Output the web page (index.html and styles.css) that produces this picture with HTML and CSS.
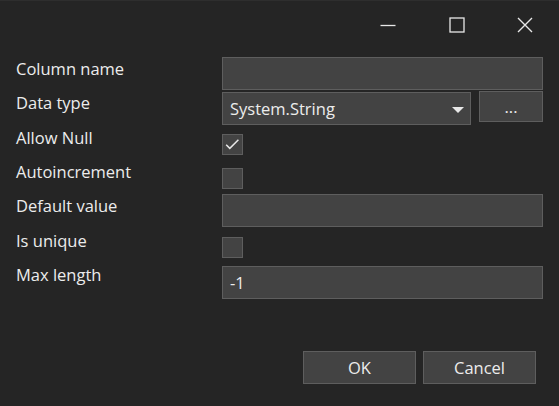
FILE: index.html
```html
<!DOCTYPE html>
<html>
<head>
<meta charset="utf-8">
<link rel="stylesheet" href="styles.css">
</head>
<body>
<div class="window">
  <div class="titlebar">
    <div class="tb-btn"><svg width="16" height="16" viewBox="0 0 16 16"><path d="M0.5 8.5h15" stroke="#e8e8e8" stroke-width="1.3" fill="none"/></svg></div>
    <div class="tb-btn"><svg width="16" height="16" viewBox="0 0 16 16"><rect x="1" y="1" width="14" height="14" stroke="#e8e8e8" stroke-width="1.3" fill="none"/></svg></div>
    <div class="tb-btn last"><svg width="16" height="16" viewBox="0 0 16 16"><path d="M1 1L15 15M15 1L1 15" stroke="#e8e8e8" stroke-width="1.4" fill="none"/></svg></div>
  </div>
  <div class="form">
    <div class="label">Column name</div>
    <div class="cell"><div class="input"></div></div>

    <div class="label">Data type</div>
    <div class="cell combo-row">
      <div class="combo"><span>System.String</span><svg class="arrow" width="12" height="6" viewBox="0 0 12 6"><path d="M0 0h12L6 6z" fill="#e8e8e8"/></svg></div>
      <div class="dots">...</div>
    </div>

    <div class="label">Allow Null</div>
    <div class="cell check-cell"><div class="check"><svg width="19" height="19" viewBox="0 0 19 19"><path d="M3.2 9.8l3.6 3.6 8.6-8.6" stroke="#e8e8e8" stroke-width="1.5" fill="none"/></svg></div></div>

    <div class="label">Autoincrement</div>
    <div class="cell check-cell"><div class="check"></div></div>

    <div class="label">Default value</div>
    <div class="cell"><div class="input"></div></div>

    <div class="label">Is unique</div>
    <div class="cell check-cell"><div class="check"></div></div>

    <div class="label">Max length</div>
    <div class="cell last-cell"><div class="input"><span>-1</span></div></div>
  </div>
  <div class="footer">
    <div class="btn">OK</div>
    <div class="btn">Cancel</div>
  </div>
</div>
</body>
</html>
```
FILE: styles.css
```css
html, body {
  margin: 0;
  padding: 0;
  background: #252525;
}
.window {
  width: 559px;
  height: 406px;
  background: #252525;
  border-top: 1px solid #2e2e2e;
  box-sizing: border-box;
  font-family: "Open Sans", "Noto Sans", sans-serif;
  font-size: 16.5px;
  color: #ececec;
  position: relative;
}
.titlebar {
  height: 48px;
  display: flex;
  justify-content: flex-end;
}
.tb-btn {
  width: 69px;
  display: flex;
  align-items: center;
  justify-content: center;
}
.tb-btn.last {
  width: 68px;
}
.form {
  margin-top: 8px;
  padding: 0 16px;
  display: grid;
  grid-template-columns: 206px 321px;
  grid-auto-rows: 34.33px;
}
.label {
  line-height: 22px;
  padding-top: 1px;
  white-space: nowrap;
}
.cell {
  display: flex;
  align-items: flex-start;
}
.input {
  box-sizing: border-box;
  width: 321px;
  height: 33px;
  background: #434343;
  border: 1px solid #5e5e5e;
  padding-left: 7px;
  display: flex;
  align-items: center;
}
.last-cell {
  padding-top: 3px;
}
.combo-row {
  gap: 8px;
}
.combo {
  box-sizing: border-box;
  width: 249px;
  height: 33px;
  margin-top: 1px;
  background: #434343;
  border: 1px solid #5e5e5e;
  padding: 0 6px 0 7px;
  display: flex;
  align-items: center;
  justify-content: space-between;
}
.arrow {
  margin-top: 2px;
}
.dots {
  box-sizing: border-box;
  width: 64px;
  height: 31px;
  background: #434343;
  border: 1px solid #5e5e5e;
  display: flex;
  align-items: center;
  justify-content: center;
  line-height: 1;
}
.check-cell {
  padding-top: 8px;
}
.check {
  box-sizing: border-box;
  width: 21px;
  height: 21px;
  background: #434343;
  border: 1px solid #5e5e5e;
  display: flex;
  align-items: center;
  justify-content: center;
}
.footer {
  position: absolute;
  right: 23px;
  top: 350px;
  display: flex;
  gap: 7px;
}
.btn {
  box-sizing: border-box;
  width: 113px;
  height: 33px;
  background: #434343;
  border: 1px solid #5e5e5e;
  display: flex;
  align-items: center;
  justify-content: center;
}
```
